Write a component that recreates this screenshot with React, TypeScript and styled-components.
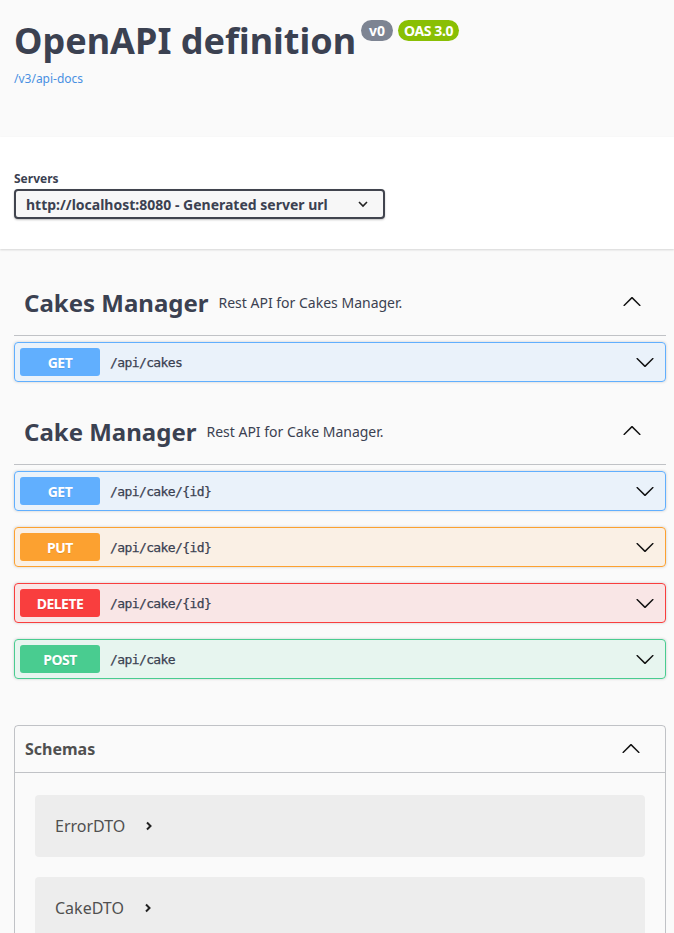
import React from "react";
import styled, { createGlobalStyle } from "styled-components";

const GlobalStyle = createGlobalStyle`
  html, body { margin: 0; padding: 0; }
  body {
    background: #fafafa;
    font-family: "Noto Sans", "Open Sans", sans-serif;
    color: #3b4151;
  }
  * { box-sizing: border-box; }
`;

const Page = styled.div`
  width: 674px;
  min-height: 933px;
  background: #fafafa;
`;

const InfoSection = styled.section`
  height: 137px;
  padding: 16px 8px 0 14px;
`;

const TitleRow = styled.div`
  display: flex;
  align-items: flex-start;
  gap: 5px;
`;

const Title = styled.h2`
  margin: 0;
  font-size: 36px;
  font-weight: 700;
  color: #3b4151;
  line-height: 1.4;
`;

const Badge = styled.span<{ $bg: string; $tight?: boolean }>`
  display: inline-block;
  min-width: 32px;
  margin-top: 4px;
  padding: 1px 6px;
  border-radius: 57px;
  background: ${(p) => p.$bg};
  color: #fff;
  font-size: 14px;
  font-weight: 700;
  line-height: 19px;
  text-align: center;
  letter-spacing: ${(p) => (p.$tight ? "-0.4px" : "0")};
`;

const DocLink = styled.a`
  display: inline-block;
  margin-top: -1px;
  font-size: 12px;
  color: #4990e2;
  text-decoration: none;
`;

const SchemeContainer = styled.section`
  background: #fff;
  box-shadow: 0 1px 2px 0 rgba(0, 0, 0, 0.15);
  padding: 34px 8px 30px 14px;
  margin-bottom: 20px;
`;

const ServersLabel = styled.div`
  margin-bottom: 2px;
  font-size: 12px;
  font-weight: 700;
  color: #3b4151;
  line-height: 16px;
`;

const Select = styled.div`
  display: inline-flex;
  align-items: center;
  justify-content: space-between;
  width: 371px;
  height: 30px;
  padding: 0 14px 0 10px;
  border: 2px solid #41444e;
  border-radius: 4px;
  background: #f7f7f7;
  box-shadow: 0 1px 2px 0 rgba(0, 0, 0, 0.25);
  font-size: 14px;
  font-weight: 700;
  color: #3b4151;
`;

const Wrapper = styled.div`
  padding: 0 8px 0 14px;
`;

const TagSection = styled.section``;

const TagHeader = styled.h3`
  display: flex;
  align-items: center;
  height: 67px;
  margin: 0 0 6px;
  padding: 0 24px 0 10px;
  border-bottom: 1px solid rgba(59, 65, 81, 0.3);
  font-size: 24px;
  font-weight: 700;
  color: #3b4151;
`;

const TagDesc = styled.small`
  flex: 1;
  padding: 0 10px;
  font-size: 14px;
  font-weight: 400;
  color: #3b4151;
`;

const methodColors: Record<string, string> = {
  GET: "97,175,254",
  PUT: "252,161,48",
  DELETE: "249,62,62",
  POST: "73,204,144",
};

const OpBlock = styled.div<{ $rgb: string }>`
  display: flex;
  align-items: center;
  height: 40px;
  margin: 0 0 16px;
  padding: 0 10px 0 5px;
  border: 1px solid rgb(${(p) => p.$rgb});
  border-radius: 4px;
  background: rgba(${(p) => p.$rgb}, 0.1);
  box-shadow: 0 0 3px rgba(0, 0, 0, 0.19);
`;

const MethodTag = styled.span<{ $rgb: string }>`
  min-width: 80px;
  height: 28px;
  display: flex;
  align-items: center;
  justify-content: center;
  border-radius: 3px;
  background: rgb(${(p) => p.$rgb});
  color: #fff;
  font-size: 14px;
  font-weight: 700;
  letter-spacing: -0.5px;
  text-shadow: 0 1px 0 rgba(0, 0, 0, 0.1);
`;

const OpPath = styled.span`
  flex: 1;
  padding: 0 10px;
  font-family: "DejaVu Sans Mono", monospace;
  font-size: 13px;
  font-weight: 400;
  letter-spacing: -0.6px;
  color: #3b4151;
  -webkit-text-stroke: 0.25px #3b4151;
`;

const Models = styled.section`
  margin: 46px 0 0;
  border: 1px solid rgba(59, 65, 81, 0.3);
  border-radius: 4px;
`;

const ModelsHeader = styled.h4`
  display: flex;
  align-items: center;
  justify-content: space-between;
  height: 47px;
  margin: 0;
  padding: 0 24px 0 10px;
  border-bottom: 1px solid rgba(59, 65, 81, 0.3);
  font-size: 16px;
  font-weight: 700;
  color: #505050;
`;

const ModelList = styled.div`
  display: flex;
  flex-direction: column;
  gap: 20px;
  padding: 22px 20px 20px;
`;

const ModelBox = styled.div`
  display: flex;
  align-items: center;
  gap: 19px;
  height: 62px;
  padding: 0 20px;
  border-radius: 4px;
  background: rgba(0, 0, 0, 0.05);
  font-size: 16px;
  color: #505050;
`;

const Chevron = ({ up = false }: { up?: boolean }) => (
  <svg
    width="20"
    height="20"
    viewBox="0 0 20 20"
    style={{ transform: up ? "rotate(180deg)" : undefined, flexShrink: 0 }}
  >
    <path
      fill="#111"
      d="M17.418 6.109c.272-.268.709-.268.979 0s.271.701 0 .969l-7.908 7.83c-.27.268-.707.268-.979 0l-7.908-7.83c-.27-.268-.27-.701 0-.969.271-.268.709-.268.979 0L10 13.25l7.418-7.141z"
    />
  </svg>
);

const SmallArrow = () => (
  <svg width="12" height="10" viewBox="0 0 12 10">
    <polyline points="2,3 6,7 10,3" fill="none" stroke="#222" strokeWidth="1.6" />
  </svg>
);

const RightArrow = () => (
  <svg width="10" height="12" viewBox="0 0 10 12">
    <polyline points="3,2.5 6.5,6 3,9.5" fill="none" stroke="#222" strokeWidth="2" />
  </svg>
);

type Op = { method: string; path: string };

const Operation = ({ method, path }: Op) => (
  <OpBlock $rgb={methodColors[method]}>
    <MethodTag $rgb={methodColors[method]}>{method}</MethodTag>
    <OpPath>{path}</OpPath>
    <Chevron />
  </OpBlock>
);

const tags: { name: string; desc: string; ops: Op[] }[] = [
  {
    name: "Cakes Manager",
    desc: "Rest API for Cakes Manager.",
    ops: [{ method: "GET", path: "/api/cakes" }],
  },
  {
    name: "Cake Manager",
    desc: "Rest API for Cake Manager.",
    ops: [
      { method: "GET", path: "/api/cake/{id}" },
      { method: "PUT", path: "/api/cake/{id}" },
      { method: "DELETE", path: "/api/cake/{id}" },
      { method: "POST", path: "/api/cake" },
    ],
  },
];

export default function App() {
  return (
    <Page>
      <GlobalStyle />
      <InfoSection>
        <TitleRow>
          <Title>OpenAPI definition</Title>
          <Badge $bg="#7d8492">v0</Badge>
          <Badge $bg="#89bf04" $tight>
            OAS 3.0
          </Badge>
        </TitleRow>
        <DocLink href="#">/v3/api-docs</DocLink>
      </InfoSection>
      <SchemeContainer>
        <ServersLabel>Servers</ServersLabel>
        <Select>
          <span>http://localhost:8080 - Generated server url</span>
          <SmallArrow />
        </Select>
      </SchemeContainer>
      <Wrapper>
        {tags.map((t) => (
          <TagSection key={t.name}>
            <TagHeader>
              <span>{t.name}</span>
              <TagDesc>{t.desc}</TagDesc>
              <Chevron up />
            </TagHeader>
            {t.ops.map((o) => (
              <Operation key={o.method + o.path} {...o} />
            ))}
          </TagSection>
        ))}
        <Models>
          <ModelsHeader>
            <span>Schemas</span>
            <Chevron up />
          </ModelsHeader>
          <ModelList>
            <ModelBox>
              <span>ErrorDTO</span>
              <RightArrow />
            </ModelBox>
            <ModelBox>
              <span>CakeDTO</span>
              <RightArrow />
            </ModelBox>
          </ModelList>
        </Models>
      </Wrapper>
    </Page>
  );
}
